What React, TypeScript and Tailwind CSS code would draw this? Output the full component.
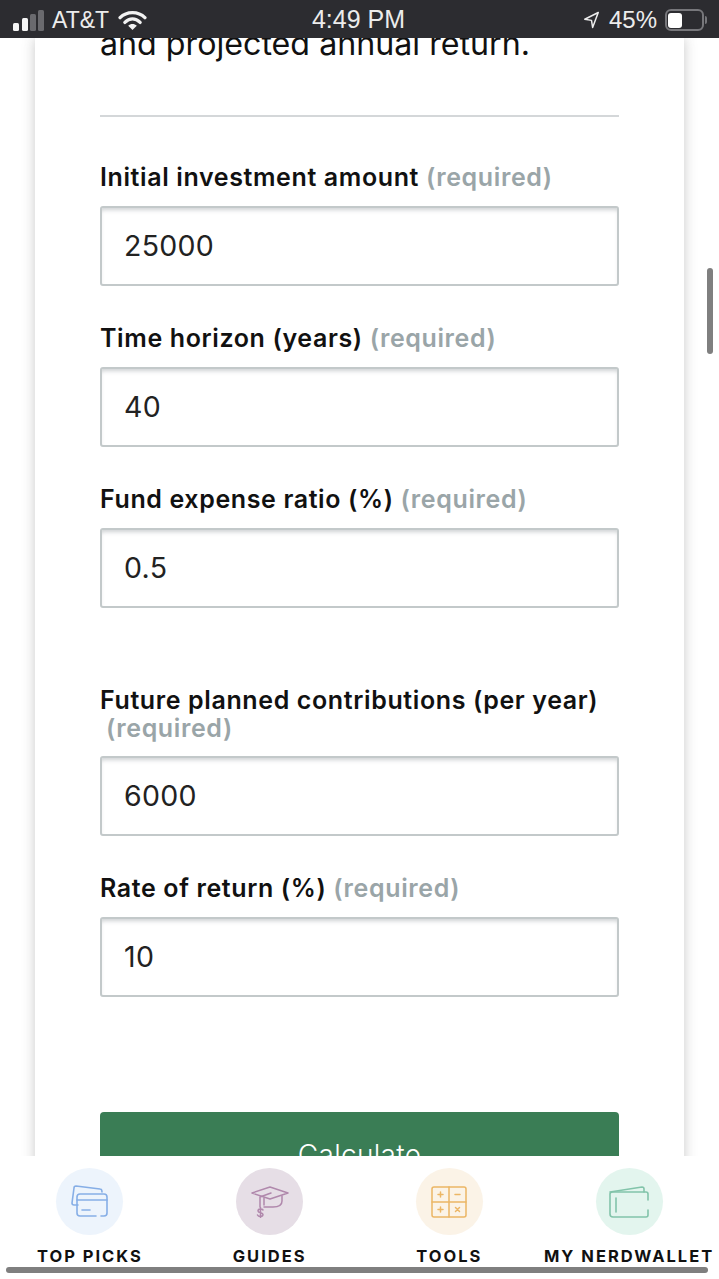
function Field({ label, value, wrap, mt }: { label: string; value: string; wrap?: boolean; mt: string }) {
  return (
    <div className={mt}>
      <div className={`whitespace-nowrap text-[25px] font-semibold tracking-[0.62px] text-[#111] ${wrap ? "leading-[28px]" : "leading-[29px]"}`}>
        {label}{wrap ? <br /> : " "}
        <span className={`text-[#9aa5a8] ${wrap ? "ml-[6px]" : ""}`}>(required)</span>
      </div>
      <div className="mt-[14px] h-[80px] rounded-[3px] border-2 border-[#c3c9ca] bg-white pl-[22px] pr-[22px] flex items-center text-[28.5px] tracking-[0.3px] text-[#222] shadow-[inset_0_4px_4px_-2px_rgba(90,100,105,0.3)]">
        {value}
      </div>
    </div>
  );
}

function NavItem({ label, bg, children }: { label: string; bg: string; children: React.ReactNode }) {
  return (
    <div className="flex w-[180px] flex-col items-center">
      <div className={`flex h-[67px] w-[67px] items-center justify-center rounded-full ${bg}`}>{children}</div>
      <div className="mt-[11px] whitespace-nowrap text-[16.5px] leading-[20px] font-bold tracking-[2px] text-[#111]">{label}</div>
    </div>
  );
}

export default function App() {
  return (
    <div className="relative h-[1279px] w-[719px] overflow-hidden bg-white font-['Inter','Liberation_Sans',sans-serif]">
      <div className="relative z-20 flex h-[38px] items-center justify-between bg-[#2c2c30] pl-[13px] pr-[15px] pt-[2px] text-[23px] text-[#ececec] font-['Liberation_Sans',sans-serif]">
        <div className="flex w-[200px] items-center">
          <svg width="32" height="21" viewBox="0 0 32 21" fill="none">
            <rect x="0" y="13" width="6" height="8" rx="1.5" fill="#f5f5f5" />
            <rect x="9" y="8" width="6" height="13" rx="1.5" fill="#f5f5f5" />
            <rect x="17" y="4" width="6" height="17" rx="1.5" fill="#6a6a6e" />
            <rect x="25" y="0" width="6" height="21" rx="1.5" fill="#6a6a6e" />
          </svg>
          <span className="ml-[7px]">AT&amp;T</span>
          <svg className="ml-[9px]" width="29" height="21" viewBox="0 0 30 22" fill="none">
            <path d="M2 8 C9 1 21 1 28 8" stroke="#f2f2f2" strokeWidth="3.5" strokeLinecap="round" />
            <path d="M7 13 C12 8 18 8 23 13" stroke="#f2f2f2" strokeWidth="3.5" strokeLinecap="round" />
            <path d="M15 21 L10.5 16.5 C13 14 17 14 19.5 16.5 Z" fill="#f2f2f2" />
          </svg>
        </div>
        <div className="text-[25px]">4:49 PM</div>
        <div className="flex w-[200px] items-center justify-end">
          <svg width="19" height="18" viewBox="0 0 22 24" fill="none">
            <path d="M20 2 L2 11 L11 12.5 L12.5 22 Z" stroke="#ececec" strokeWidth="2" strokeLinejoin="round" />
          </svg>
          <span className="ml-[8px] text-[24px]">45%</span>
          <div className="relative ml-[8px] flex h-[22px] w-[39px] items-center rounded-[6px] border-2 border-[#77777b] p-[1px]">
            <div className="h-[15px] w-[14px] rounded-[3px] bg-white" />
            <div className="absolute -right-[5px] top-[5px] h-[8px] w-[2px] rounded-r bg-[#77777b]" />
          </div>
        </div>
      </div>

      <div className="mx-[35px] h-[1241px] overflow-hidden bg-white px-[65px] shadow-[0_0_12px_rgba(60,60,60,0.28)]">
        <div className="-mt-[14px] text-[32.2px] leading-[40px] text-[#111] whitespace-nowrap">and projected annual return.</div>
        <div className="mt-[51px] h-[2px] bg-[#d4d7d9]" />
        <Field mt="mt-[46px]" label="Initial investment amount" value="25000" />
        <Field mt="mt-[38px]" label="Time horizon (years)" value="40" />
        <Field mt="mt-[38px]" label="Fund expense ratio (%)" value="0.5" />
        <Field mt="mt-[78px]" label="Future planned contributions (per year)" wrap value="6000" />
        <Field mt="mt-[38px]" label="Rate of return (%)" value="10" />
        <div className="mt-[115px] flex h-[80px] items-center justify-center rounded-[4px] bg-[#3a7d55] pt-[6px] text-[28px] font-light tracking-[0.3px] text-white">Calculate</div>
      </div>

      <div className="absolute right-[6px] top-[268px] z-10 h-[86px] w-[6px] rounded-full bg-[#7f7f7f]" />

      <div className="absolute inset-x-0 bottom-0 z-10 h-[123px] bg-white">
        <div className="flex pt-[12px]">
          <NavItem label="TOP PICKS" bg="bg-[#edf4fc]">
            <svg width="38" height="34" viewBox="0 0 38 34" fill="none" stroke="#86aee6" strokeWidth="1.6" strokeLinecap="round" strokeLinejoin="round">
              <path d="M7 20 H3 C2 20 1 19 1 18 L3 3 C3 2 4 1 5 1 L29 4 C30 4 31 5 31 7" />
              <path d="M30 31 H33 C35 31 36 30 36 28 V12 C36 10 35 9 33 9 H9 C7 9 6 10 6 12 V28 C6 30 7 31 9 31 H25" />
              <path d="M6 15 H36" />
              <path d="M11 25 H19" />
            </svg>
          </NavItem>
          <NavItem label="GUIDES" bg="bg-[#e6dee6]">
            <svg width="38" height="32" viewBox="0 0 38 32" fill="none" stroke="#b088ac" strokeWidth="1.5" strokeLinecap="round" strokeLinejoin="round">
              <path d="M1 7 L19 1 L37 7 L19 13 Z" />
              <path d="M13 12 V19 M13 21 H22 C26 21 31 20 31 15 V10" />
              <path d="M20 7 L9 11 V21" />
              <path d="M12 24 C11 22.5 7 22.5 7 25 C7 27 12 26.5 12 28.5 C12 31 7.5 31 6.5 29 M9.5 21.5 V32" />
            </svg>
          </NavItem>
          <NavItem label="TOOLS" bg="bg-[#fbf3e7]">
            <svg width="36" height="32" viewBox="0 0 36 32" fill="none" stroke="#ecb665" strokeWidth="1.5" strokeLinecap="round" strokeLinejoin="round">
              <rect x="1" y="1" width="34" height="30" rx="2" />
              <path d="M18 1 V31 M1 16 H35" />
              <path d="M7 8.5 H12 M9.5 6 V11 M24 8.5 H29 M7 23.5 H12 M9.5 21 V26 M24.5 21.5 L28.5 25.5 M28.5 21.5 L24.5 25.5" />
            </svg>
          </NavItem>
          <NavItem label="MY NERDWALLET" bg="bg-[#e3f5ee]">
            <svg width="40" height="32" viewBox="0 0 40 32" fill="none" stroke="#82c4aa" strokeWidth="1.6" strokeLinecap="round" strokeLinejoin="round">
              <path d="M1 6 L33 1 C34 1 35 2 35 3 V6" />
              <path d="M39 24 V29 C39 30 38 31 37 31 H4 C2 31 1 30 1 28 V8 C1 7 2 6 4 6 H37 C38 6 39 7 39 8 V14" />
              <path d="M7 12 V26" />
            </svg>
          </NavItem>
        </div>
        <div className="absolute bottom-[6px] left-[6px] h-[6px] w-[702px] rounded-full bg-[#7f7f7f]" />
      </div>
    </div>
  );
}
